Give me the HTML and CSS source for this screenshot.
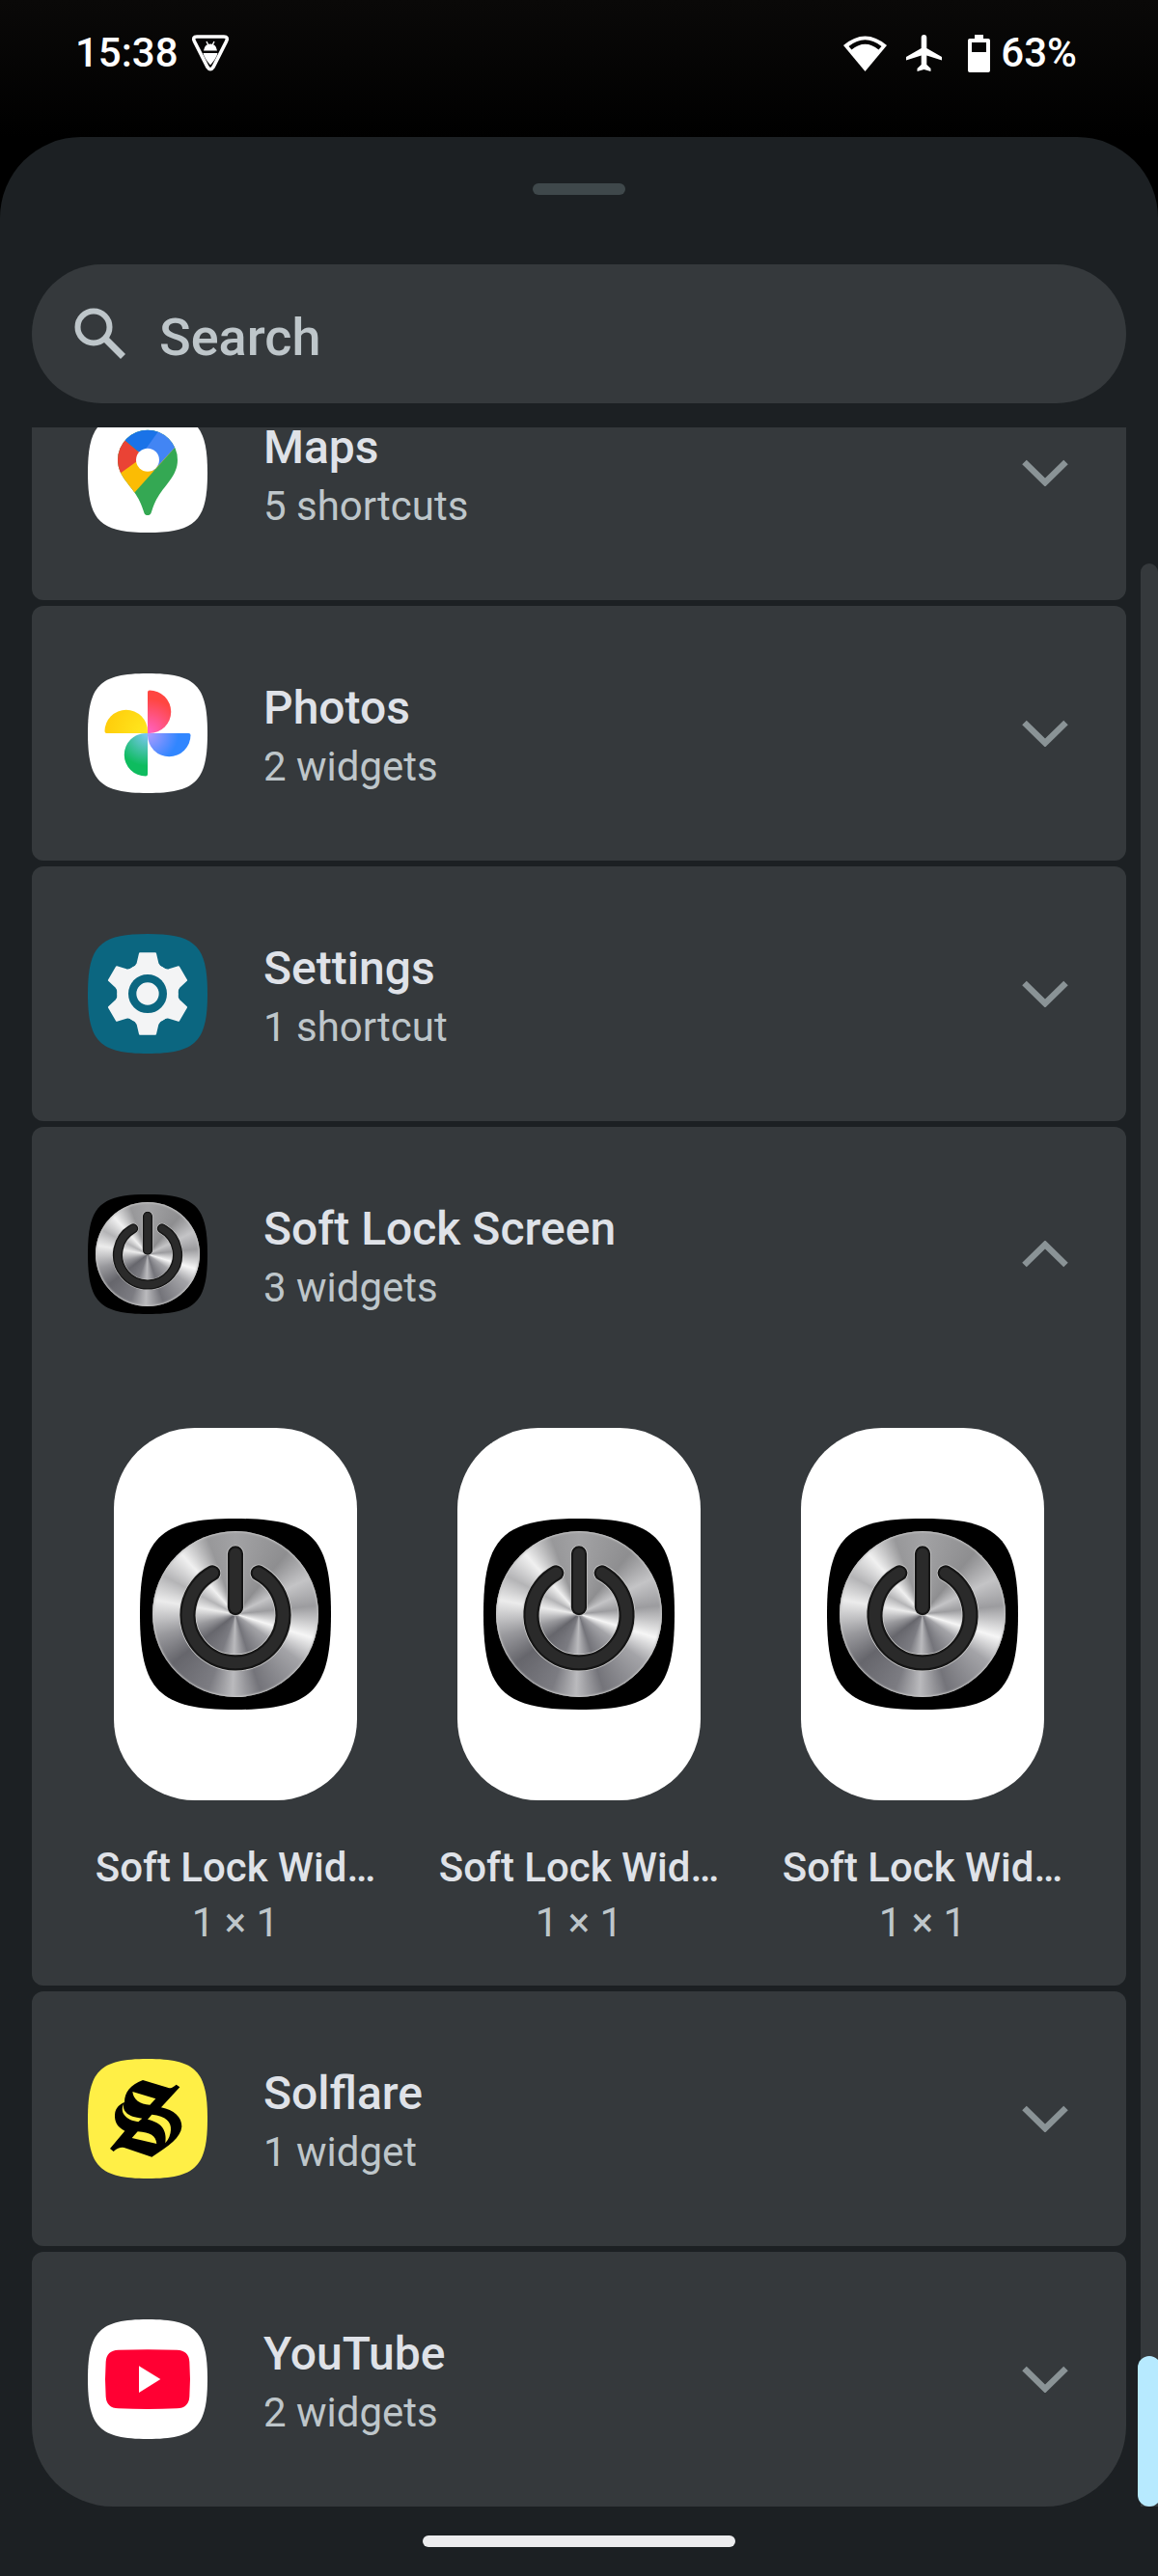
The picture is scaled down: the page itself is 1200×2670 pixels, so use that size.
FILE: index.html
```html
<!DOCTYPE html>
<html lang="en">
<head>
    <meta charset="UTF-8">
    <meta name="viewport" content="width=device-width, initial-scale=1.0">
    <title>Widgets</title>
    <link rel="stylesheet" href="styles.css">
</head>
<body>

<!-- Shared shapes -->
<svg class="defs" width="0" height="0" aria-hidden="true">
    <symbol id="squircle" viewBox="0 0 100 100">
        <path d="M50 0C10 0 0 10 0 50s10 50 50 50 50-10 50-50S90 0 50 0z"/>
    </symbol>
    <symbol id="chevron" viewBox="0 0 48 28">
        <path d="M2.500 3L24 24L45.500 3" fill="none" stroke="#8a9396" stroke-width="6.500"/>
    </symbol>
    <symbol id="power" viewBox="0 0 100 100">
        <g fill="none" stroke-linecap="round">
            <path d="M38 28.500A25 25 0 1 0 62 28.500M50 18.400V46.500" stroke="#d0d0d0" stroke-width="9"/>
            <path d="M38 28.500A25 25 0 1 0 62 28.500M50 18.400V46.500" stroke="#151515" stroke-width="8.200"/>
            <path d="M38 28.500A25 25 0 1 0 62 28.500M50 18.400V46.500" stroke="#2a2a2a" stroke-width="6"/>
        </g>
    </symbol>
</svg>

<header class="status-bar">
    <div class="status-group">
        <span>15:38</span>
        <svg class="vpn" width="40" height="40" viewBox="0 0 40 40" aria-hidden="true">
            <path d="M6 3H34Q39 3 36.500 8L23 34.500Q20 39 17 34.500L3.500 8Q1 3 6 3z" fill="none" stroke="#fff" stroke-width="3.600"/>
            <path d="M16 8L18 12M24 8L22 12" stroke="#fff" stroke-width="1.400"/>
            <path d="M13 17.500Q14 10.500 20 10.500T27 17.500z" fill="#fff"/>
            <path d="M12.500 20H27.500Q26.500 25 20 32.500Q13.500 25 12.500 20z" fill="#fff"/>
        </svg>
    </div>
    <div class="status-group">
        <svg class="wifi" width="45" height="37" viewBox="0 0 45 37" aria-hidden="true">
            <path d="M22.500 37L0 10Q22.500-9 45 10z" fill="#fff"/>
            <path d="M5.500 11Q22.500-2.500 39.500 11L36.500 14.500Q22.500 3 8.500 14.500z" fill="#050403"/>
        </svg>
        <svg class="plane" width="37" height="38" viewBox="0 0 37 38" aria-hidden="true">
            <path d="M18.500 0Q21.300 0 21.300 3V14L37 23V26.500L21.300 21.500V31L25.500 35V38L18.500 36L11.500 38V35L15.700 31V21.500L0 26.500V23L15.700 14V3Q15.700 0 18.500 0z" fill="#fff"/>
        </svg>
        <svg class="battery" width="23" height="39" viewBox="0 0 23 39" aria-hidden="true">
            <path d="M7 0H16V4H21Q23 4 23 6V37Q23 39 21 39H2Q0 39 0 37V6Q0 4 2 4H7z" fill="#fff"/>
            <path d="M4 8H19V18H4z" fill="#050403"/>
        </svg>
        <span>63%</span>
    </div>
</header>

<main class="sheet">
    <div class="handle"></div>

    <label class="search">
        <svg width="54" height="54" viewBox="0 0 54 54" aria-hidden="true">
            <circle cx="20" cy="20" r="16.500" fill="none" stroke="#bec6ca" stroke-width="6"/>
            <path d="M32 32L50.500 50.500" stroke="#bec6ca" stroke-width="7"/>
        </svg>
        <input type="text" placeholder="Search" aria-label="Search">
    </label>

    <div class="scroll-area">
        <div class="app-list">
            <section class="card card-scrolled">
                <button class="app-row" aria-expanded="false">
                    <svg class="app-icon" viewBox="0 0 124 124" aria-hidden="true">
                        <use href="#squircle" fill="#fff"/>
                        <clipPath id="pin">
                            <path d="M62 106c-3 0-3.600-2-4.500-5-4-13-9.500-19-17-29C34 63.500 31 57 31 48.700a31 31 0 0 1 62 0C93 57 90 63.500 83.500 72c-7.500 10-13 16-17 29-.9 3-1.500 5-4.500 5z"/>
                        </clipPath>
                        <g clip-path="url(#pin)">
                            <path d="M20 10H104V110H20z" fill="#34a853"/>
                            <path d="M20 76L60 30L91 35L48 83L20 110z" fill="#fbbc04"/>
                            <path d="M20 10L38 28L58 45L33 63L20 76z" fill="#ea4335"/>
                            <path d="M76 15H100V25L68 60L62 50L54 41z" fill="#4285f4"/>
                            <path d="M38 28L56 43L76 15L50 10z" fill="#1a73e8"/>
                        </g>
                        <circle cx="62" cy="48.700" r="12" fill="#fff"/>
                    </svg>
                    <span class="app-text">
                        <span class="app-name">Maps</span>
                        <span class="app-count">5 shortcuts</span>
                    </span>
                    <svg class="chevron" aria-hidden="true"><use href="#chevron"/></svg>
                </button>
            </section>

            <section class="card">
                <button class="app-row" aria-expanded="false">
                    <svg class="app-icon" viewBox="0 0 124 124" aria-hidden="true">
                        <radialGradient id="red" gradientUnits="userSpaceOnUse" cx="62" cy="62" r="36">
                            <stop offset="0" stop-color="#ff63c8"/><stop offset="1" stop-color="#ff4641"/>
                        </radialGradient>
                        <radialGradient id="blue" gradientUnits="userSpaceOnUse" cx="62" cy="62" r="32">
                            <stop offset="0" stop-color="#b09cff"/><stop offset="1" stop-color="#3186ff"/>
                        </radialGradient>
                        <radialGradient id="green" gradientUnits="userSpaceOnUse" cx="62" cy="62" r="34">
                            <stop offset="0" stop-color="#80c8f8"/><stop offset="1" stop-color="#0ebc5f"/>
                        </radialGradient>
                        <radialGradient id="yellow" gradientUnits="userSpaceOnUse" cx="62" cy="62" r="46">
                            <stop offset="0" stop-color="#ffe920"/><stop offset="1" stop-color="#ffcc0a"/>
                        </radialGradient>
                        <use href="#squircle" fill="#fff"/>
                        <path d="M62 62V19.500q0-2 2-2A22.250 22.250 0 0 1 64 62z" fill="url(#red)"/>
                        <path d="M62 62H104.500q2 0 2 2A22.250 22.250 0 0 1 62 64z" fill="url(#blue)"/>
                        <path d="M62 62V104.500q0 2-2 2A22.250 22.250 0 0 1 60 62z" fill="url(#green)"/>
                        <path d="M62 62H19.500q-2 0-2-2A22.250 22.250 0 0 1 62 60z" fill="url(#yellow)"/>
                    </svg>
                    <span class="app-text">
                        <span class="app-name">Photos</span>
                        <span class="app-count">2 widgets</span>
                    </span>
                    <svg class="chevron" aria-hidden="true"><use href="#chevron"/></svg>
                </button>
            </section>

            <section class="card">
                <button class="app-row" aria-expanded="false">
                    <svg class="app-icon" viewBox="0 0 372 372" aria-hidden="true">
                        <use href="#squircle" fill="#0b6680"/>
                        <g transform="translate(186 186)">
                            <g fill="#f3f4f5" stroke="#f3f4f5" stroke-width="6" stroke-linejoin="round">
                                <circle r="92"/>
                                <path id="tooth" d="M-24-125H24L31-95Q34-85 46-79H-46Q-34-85-31-95z"/>
                                <use href="#tooth" transform="rotate(60)"/>
                                <use href="#tooth" transform="rotate(120)"/>
                                <use href="#tooth" transform="rotate(180)"/>
                                <use href="#tooth" transform="rotate(240)"/>
                                <use href="#tooth" transform="rotate(300)"/>
                            </g>
                            <circle r="47.500" fill="none" stroke="#0b6680" stroke-width="25"/>
                        </g>
                    </svg>
                    <span class="app-text">
                        <span class="app-name">Settings</span>
                        <span class="app-count">1 shortcut</span>
                    </span>
                    <svg class="chevron" aria-hidden="true"><use href="#chevron"/></svg>
                </button>
            </section>

            <section class="card">
                <button class="app-row" aria-expanded="true">
                    <span class="app-icon power-icon">
                        <svg viewBox="0 0 100 100" aria-hidden="true"><use href="#squircle"/></svg>
                        <span class="metal"></span>
                        <svg viewBox="0 0 100 100" aria-hidden="true"><use href="#power"/></svg>
                    </span>
                    <span class="app-text">
                        <span class="app-name">Soft Lock Screen</span>
                        <span class="app-count">3 widgets</span>
                    </span>
                    <svg class="chevron chevron-up" aria-hidden="true"><use href="#chevron"/></svg>
                </button>
                <div class="widgets">
                    <div class="widget">
                        <div class="preview">
                            <span class="power-icon power-large">
                                <svg viewBox="0 0 100 100" aria-hidden="true"><use href="#squircle"/></svg>
                                <span class="metal"></span>
                                <svg viewBox="0 0 100 100" aria-hidden="true"><use href="#power"/></svg>
                            </span>
                        </div>
                        <span class="widget-name">Soft Lock Wid…</span>
                        <span class="widget-size">1 × 1</span>
                    </div>
                    <div class="widget">
                        <div class="preview">
                            <span class="power-icon power-large">
                                <svg viewBox="0 0 100 100" aria-hidden="true"><use href="#squircle"/></svg>
                                <span class="metal"></span>
                                <svg viewBox="0 0 100 100" aria-hidden="true"><use href="#power"/></svg>
                            </span>
                        </div>
                        <span class="widget-name">Soft Lock Wid…</span>
                        <span class="widget-size">1 × 1</span>
                    </div>
                    <div class="widget">
                        <div class="preview">
                            <span class="power-icon power-large">
                                <svg viewBox="0 0 100 100" aria-hidden="true"><use href="#squircle"/></svg>
                                <span class="metal"></span>
                                <svg viewBox="0 0 100 100" aria-hidden="true"><use href="#power"/></svg>
                            </span>
                        </div>
                        <span class="widget-name">Soft Lock Wid…</span>
                        <span class="widget-size">1 × 1</span>
                    </div>
                </div>
            </section>

            <section class="card">
                <button class="app-row" aria-expanded="false">
                    <svg class="app-icon" viewBox="0 0 372 372" aria-hidden="true">
                        <use href="#squircle" fill="#ffef46"/>
                        <g transform="translate(-93 -101)">
                            <path d="M264 167L346 192Q356 192 368 181L379 189L321 252C360 260 386 282 385 312C382 346 345 372 292 406L206 377Q190 374 173 389L162 380L208 325C184 312 176 296 177 274C179 252 193 242 207 236C207 205 225 182 264 167z"/>
                            <g fill="#ffef46">
                                <path d="M232 203L304 225L286 244C254 242 235 228 232 203z"/>
                                <path d="M205 240C199 262 216 282 262 286L250 297C212 292 190 268 205 240z"/>
                                <path d="M292 274C336 278 353 298 351 322Q350 344 334 363C339 328 328 300 279 289z"/>
                                <path d="M248 327C288 330 304 340 307 365L230 347z"/>
                            </g>
                        </g>
                    </svg>
                    <span class="app-text">
                        <span class="app-name">Solflare</span>
                        <span class="app-count">1 widget</span>
                    </span>
                    <svg class="chevron" aria-hidden="true"><use href="#chevron"/></svg>
                </button>
            </section>

            <section class="card">
                <button class="app-row" aria-expanded="false">
                    <svg class="app-icon" viewBox="0 0 372 372" aria-hidden="true">
                        <use href="#squircle" fill="#fff"/>
                        <path d="M95 95Q186 92 277 95Q314 96 316 132Q320 186 316 240Q314 276 277 277Q186 281 95 277Q58 276 56 240Q52 186 56 132Q58 96 95 95z" fill="#ff0033"/>
                        <path d="M159 145L226 186L159 228z" fill="#fff"/>
                    </svg>
                    <span class="app-text">
                        <span class="app-name">YouTube</span>
                        <span class="app-count">2 widgets</span>
                    </span>
                    <svg class="chevron" aria-hidden="true"><use href="#chevron"/></svg>
                </button>
            </section>
        </div>

        <div class="scrollbar">
            <div class="thumb"></div>
        </div>
    </div>

    <div class="home-pill"></div>
</main>

</body>
</html>
```
FILE: styles.css
```css
* {
    box-sizing: border-box;
}
body {
    margin: 0;
    min-height: 100vh;
    display: flex;
    flex-direction: column;
    background: linear-gradient(#0a0908, #000 142px);
    font-family: Roboto, sans-serif;
    color: #dfe2e8;
}
.defs {
    position: absolute;
}

/* Status bar */
.status-bar {
    display: flex;
    justify-content: space-between;
    height: 142px;
    padding: 27px 84px 59px 78px;
    color: #fff;
    font-size: 42px;
    font-weight: 500;
    line-height: 56px;
}
.status-group {
    display: flex;
    align-items: center;
}
.vpn {
    margin-left: 13px;
}
.plane {
    margin-left: 20px;
}
.battery {
    margin: 0 11px 0 27px;
}

/* Bottom sheet */
.sheet {
    flex: 1;
    display: flex;
    flex-direction: column;
    overflow: hidden;
    background: #1c2023;
    border-radius: 84px 84px 0 0;
}
.handle {
    width: 96px;
    height: 12px;
    margin: 48px auto 72px;
    border-radius: 6px;
    background: #3f484b;
}
.search {
    display: flex;
    align-items: center;
    gap: 34px;
    height: 144px;
    margin: 0 33px 25px;
    padding: 0 44px;
    border-radius: 72px;
    background: #35393c;
}
.search input {
    flex: 1;
    min-width: 0;
    padding: 6px 0 0;
    border: none;
    outline: none;
    background: none;
    color: #bec6ca;
    font: 500 54px Roboto, sans-serif;
}
.search input::placeholder {
    color: #bec6ca;
    opacity: 1;
}

/* List */
.scroll-area {
    display: flex;
    padding-left: 33px;
    overflow: hidden;
}
.app-list {
    flex: 1;
    display: flex;
    flex-direction: column;
    gap: 6px;
    overflow: hidden;
}
.card {
    border-radius: 12px;
    background: #35393c;
}
.card-scrolled {
    margin-top: -85px;
}
.card:last-child {
    border-radius: 12px 12px 84px 84px;
}
.app-row {
    display: flex;
    align-items: center;
    width: 100%;
    height: 264px;
    padding: 0 60px 0 58px;
    border: none;
    background: none;
    font-family: inherit;
    color: inherit;
    text-align: left;
    cursor: pointer;
}
.app-icon {
    flex: none;
    width: 124px;
    height: 124px;
}
.app-text {
    flex: 1;
    display: flex;
    flex-direction: column;
    margin-left: 58px;
    padding-top: 2px;
}
.app-name {
    font-size: 48px;
    font-weight: 500;
    line-height: 68px;
}
.app-count {
    color: #bec6ca;
    font-size: 42px;
    line-height: 54px;
}
.chevron {
    width: 48px;
    height: 28px;
}
.chevron-up {
    transform: rotate(180deg);
}

/* Brushed metal power button */
.power-icon {
    display: grid;
    place-items: center;
}
.power-icon > * {
    grid-area: 1 / 1;
}
.power-icon svg {
    width: 100%;
    height: 100%;
}
.power-large {
    width: 198px;
    height: 198px;
}
.metal {
    width: 87%;
    height: 87%;
    border-radius: 50%;
    background: conic-gradient(#a2a2a4 0deg, #8e8e90 40deg, #c4c4c6 64deg, #9c9c9f 84deg, #f6f6f6 107deg, #a4a4a8 126deg, #74747a 162deg, #bababd 182deg, #7c7c82 200deg, #66666c 232deg, #98989c 254deg, #ececec 280deg, #b4b4b6 298deg, #f0f0f0 318deg, #98989a 340deg, #a2a2a4 360deg);
    box-shadow: inset 0 0 2px 1px #c4c4c4;
}

/* Widget previews */
.widgets {
    display: grid;
    grid-template-columns: repeat(3, 1fr);
    padding: 48px 33px 37px;
}
.widget {
    display: flex;
    flex-direction: column;
    align-items: center;
    font-size: 42px;
    line-height: 57px;
}
.preview {
    display: grid;
    place-items: center;
    width: 252px;
    height: 386px;
    margin-bottom: 41px;
    border-radius: 84px;
    background: #fff;
}
.widget-name {
    font-weight: 500;
}
.widget-size {
    color: #bec6ca;
}

/* Scrollbar */
.scrollbar {
    display: flex;
    flex-direction: column;
    justify-content: flex-end;
    width: 18px;
    margin: 141px 0 0 15px;
    border-radius: 9px 9px 0 0;
    background: #35393c;
}
.thumb {
    width: 24px;
    height: 156px;
    margin-left: -3px;
    border-radius: 12px;
    background: #b7eaff;
}

.home-pill {
    width: 324px;
    height: 12px;
    margin: 30px auto;
    border-radius: 6px;
    background: #ececee;
}
```
